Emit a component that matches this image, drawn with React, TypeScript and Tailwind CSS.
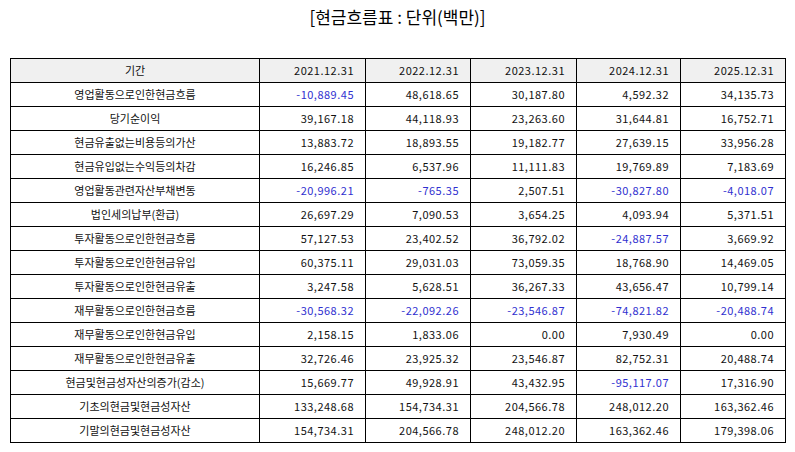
const header = ["기간", "2021.12.31", "2022.12.31", "2023.12.31", "2024.12.31", "2025.12.31"]

const rows: [string, string[]][] = [
  ["영업활동으로인한현금흐름", ["-10,889.45", "48,618.65", "30,187.80", "4,592.32", "34,135.73"]],
  ["당기순이익", ["39,167.18", "44,118.93", "23,263.60", "31,644.81", "16,752.71"]],
  ["현금유출없는비용등의가산", ["13,883.72", "18,893.55", "19,182.77", "27,639.15", "33,956.28"]],
  ["현금유입없는수익등의차감", ["16,246.85", "6,537.96", "11,111.83", "19,769.89", "7,183.69"]],
  ["영업활동관련자산부채변동", ["-20,996.21", "-765.35", "2,507.51", "-30,827.80", "-4,018.07"]],
  ["법인세의납부(환급)", ["26,697.29", "7,090.53", "3,654.25", "4,093.94", "5,371.51"]],
  ["투자활동으로인한현금흐름", ["57,127.53", "23,402.52", "36,792.02", "-24,887.57", "3,669.92"]],
  ["투자활동으로인한현금유입", ["60,375.11", "29,031.03", "73,059.35", "18,768.90", "14,469.05"]],
  ["투자활동으로인한현금유출", ["3,247.58", "5,628.51", "36,267.33", "43,656.47", "10,799.14"]],
  ["재무활동으로인한현금흐름", ["-30,568.32", "-22,092.26", "-23,546.87", "-74,821.82", "-20,488.74"]],
  ["재무활동으로인한현금유입", ["2,158.15", "1,833.06", "0.00", "7,930.49", "0.00"]],
  ["재무활동으로인한현금유출", ["32,726.46", "23,925.32", "23,546.87", "82,752.31", "20,488.74"]],
  ["현금및현금성자산의증가(감소)", ["15,669.77", "49,928.91", "43,432.95", "-95,117.07", "17,316.90"]],
  ["기초의현금및현금성자산", ["133,248.68", "154,734.31", "204,566.78", "248,012.20", "163,362.46"]],
  ["기말의현금및현금성자산", ["154,734.31", "204,566.78", "248,012.20", "163,362.46", "179,398.06"]],
]

const colW = ["w-[249px]", "w-[106px]", "w-[105px]", "w-[106px]", "w-[104px]", "w-[105px]"]

export default function App() {
  return (
    <div
      className="w-[795px] h-[452px] bg-white text-[#111]"
      style={{ fontFamily: '"Noto Sans CJK KR", "Noto Sans", sans-serif' }}
    >
      <h1 className="pt-[5px] h-[58px] text-center text-[17px] leading-[24px] text-black">
        [현금흐름표 : 단위(백만)]
      </h1>
      <table className="ml-[10px] w-[775px] table-fixed border-collapse text-[11px]">
        <thead>
          <tr className="h-[24px] bg-[#f0f0f0]">
            {header.map((h, i) => (
              <th
                key={h}
                className={`${colW[i]} border-[1.5px] border-black font-normal ${i === 0 ? "text-center" : "text-right pr-[11px] tracking-[0.5px]"}`}
              >
                {h}
              </th>
            ))}
          </tr>
        </thead>
        <tbody>
          {rows.map(([label, vals]) => (
            <tr key={label} className="h-[24px]">
              <td className="border-[1.5px] border-black text-center">{label}</td>
              {vals.map((v, i) => (
                <td
                  key={i}
                  className={`border-[1.5px] border-black text-right pr-[11px] tracking-[0.5px] ${v.startsWith("-") ? "text-[#3030d0]" : ""}`}
                >
                  {v}
                </td>
              ))}
            </tr>
          ))}
        </tbody>
      </table>
    </div>
  )
}
